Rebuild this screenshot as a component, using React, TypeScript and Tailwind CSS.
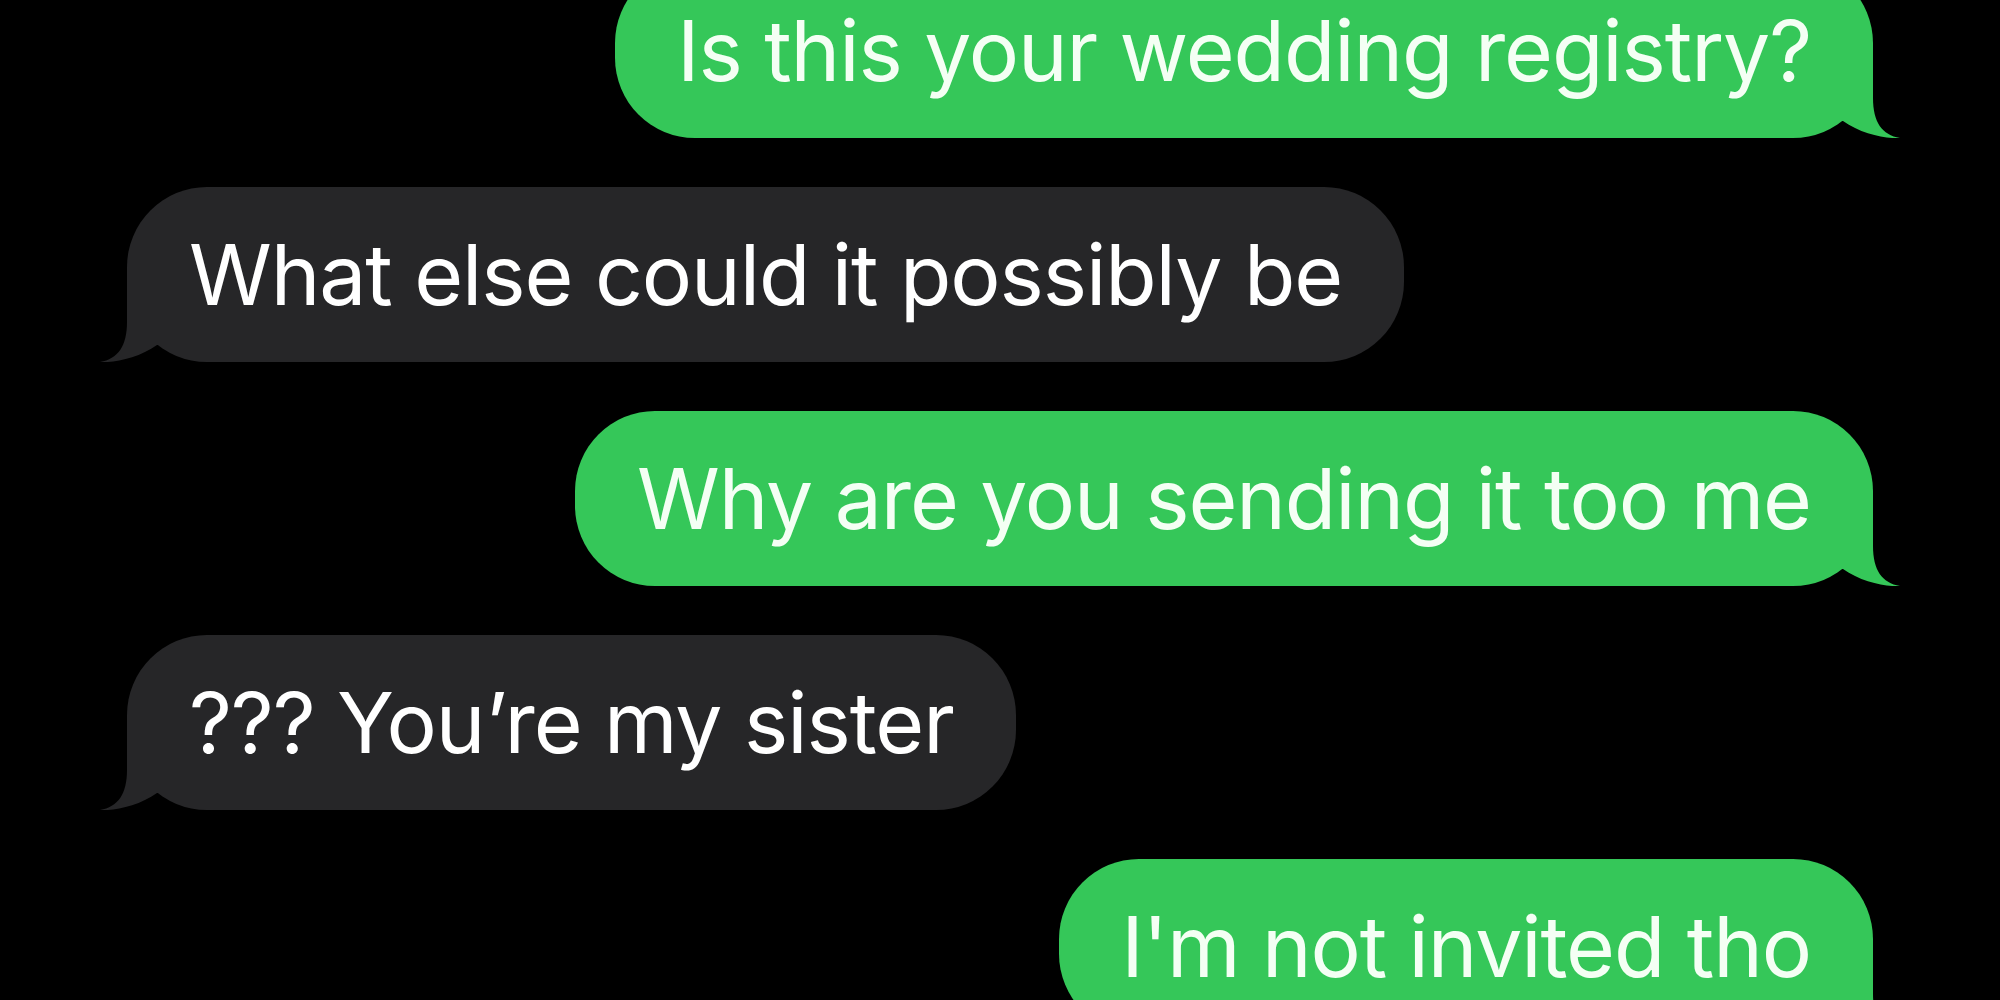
import React from "react";

type Msg = { text: string; mine: boolean };

const messages: Msg[] = [
  { text: "Is this your wedding registry?", mine: true },
  { text: "What else could it possibly be", mine: false },
  { text: "Why are you sending it too me", mine: true },
  { text: "??? You\u2019re my sister", mine: false },
  { text: "I'm not invited tho", mine: true },
];

function Tail({ mine }: { mine: boolean }) {
  // drawn for the right side, mirrored for incoming bubbles
  return (
    <svg
      viewBox="0 0 107 100"
      className={`absolute bottom-0 h-[100px] w-[107px] ${
        mine ? "right-[-27px] fill-[#35c759]" : "left-[-27px] -scale-x-100 fill-[#262628]"
      }`}
    >
      <path d="M80 5 L80 60 C80 84 89 97 107 100 C93 101 68 96 50 83 L0 83 L0 5 Z" />
    </svg>
  );
}

function Bubble({ text, mine }: Msg) {
  return (
    <div
      className={`relative flex h-[175px] items-center rounded-[80px] px-[62px] ${
        mine ? "self-end bg-[#35c759] text-[#f4fff4]" : "self-start bg-[#262628] text-white"
      }`}
    >
      <Tail mine={mine} />
      <span className="relative whitespace-nowrap text-[84px] leading-none tracking-[-1.1px] [font-family:Inter,'Liberation_Sans',sans-serif]">
        {text}
      </span>
    </div>
  );
}

export default function App() {
  return (
    <div className="h-[1000px] w-full overflow-hidden bg-black">
      <div className="-mt-[37px] flex flex-col gap-[49px] px-[127px]">
        {messages.map((m, i) => (
          <Bubble key={i} {...m} />
        ))}
      </div>
    </div>
  );
}
